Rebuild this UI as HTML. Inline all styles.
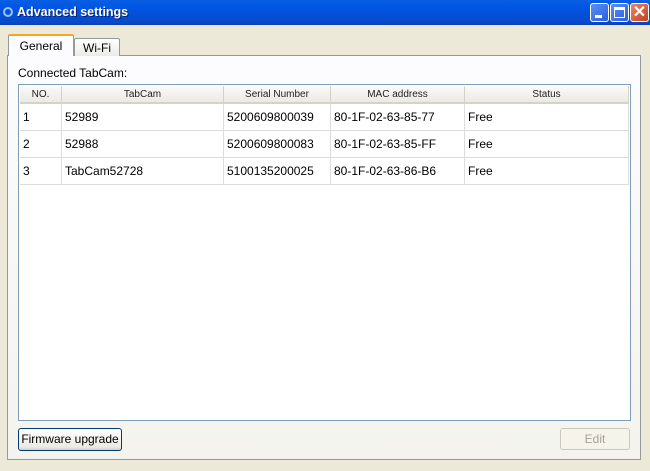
<!DOCTYPE html>
<html><head><meta charset="utf-8"><style>
*{margin:0;padding:0;box-sizing:border-box}
body{width:650px;height:471px;overflow:hidden;background:#ece9d8;font-family:"Liberation Sans",sans-serif;position:relative;font-size:11px;color:#000}
.a{position:absolute}
#title{left:0;top:0;width:650px;height:25px;background:linear-gradient(#0a5fe0,#0058e6 20%,#0250d6 60%,#0a48c8 90%,#0840b0);}
#title .t{left:17px;top:5px;color:#fff;font-weight:bold;font-size:12.5px;text-shadow:1px 1px #0a1f6e}
.wb{top:3px;width:19px;height:19px;border:1px solid #fff;border-radius:3px;background:linear-gradient(135deg,#5c8ff4,#2a5fe0)}
#panel{left:7px;top:55px;width:634px;height:405px;border:1px solid #919b9c;background:linear-gradient(#fcfcfe,#f4f3ee)}
.tab{top:36px;height:20px;border:1px solid #919b9c;border-bottom:none;background:linear-gradient(#fff,#ecebe6);font-size:12px;text-align:center;line-height:18px;border-radius:2px 2px 0 0}
#tbl{left:18px;top:84px;width:613px;height:337px;border:1px solid #7f9db9;background:#fff}
.h{top:86px;height:18px;background:linear-gradient(#fafaf8,#ebeae3);border-bottom:2px solid #d6d3c6;border-right:1px solid #d6d3c6;font-size:10px;text-align:center;line-height:17px;color:#222}
.c{height:27px;border-right:1px solid #dcdcdc;border-bottom:1px solid #dcdcdc;font-size:12px;line-height:26px;padding-left:3px}
.btn{border:1px solid #003c74;border-radius:3px;background:linear-gradient(#fff,#ecebe6 85%,#d6d0c5);font-size:12px;text-align:center;line-height:20px}
</style></head><body>
<div id="title" class="a">
<div class="a" style="left:3px;top:7px;width:10px;height:10px;border:2px solid #9cc0ff;border-radius:50%"></div>
<div class="a t">Advanced settings</div>
<div class="a wb" style="left:590px"><div class="a" style="left:4px;top:11px;width:7px;height:3px;background:#fff"></div></div>
<div class="a wb" style="left:610px"><div class="a" style="left:3px;top:3px;width:11px;height:11px;border:1px solid #fff;border-top-width:3px"></div></div>
<div class="a wb" style="left:630px;width:19px;background:linear-gradient(135deg,#e8876a,#c6401c)"><div class="a" style="left:0;top:-2px;width:17px;color:#fff;font-weight:bold;font-size:16px;text-align:center">✕</div></div>
</div>
<div id="panel" class="a"></div>
<div class="a tab" style="left:74px;top:38px;width:46px;height:18px">Wi-Fi</div>
<div class="a tab" style="left:8px;top:34px;width:66px;height:22px;border-top:2px solid #f5a623;background:#fcfcfe;line-height:20px">General</div>
<div class="a" style="left:18px;top:66px;font-size:12px">Connected TabCam:</div>
<div id="tbl" class="a"></div>
<div class="a h" style="left:20px;width:42px">NO.</div>
<div class="a h" style="left:62px;width:162px">TabCam</div>
<div class="a h" style="left:224px;width:107px">Serial Number</div>
<div class="a h" style="left:331px;width:134px">MAC address</div>
<div class="a h" style="left:465px;width:164px">Status</div>
<div class="a" style="left:20px;top:104px">
<div style="display:flex"><div class="c" style="width:42px">1</div><div class="c" style="width:162px">52989</div><div class="c" style="width:107px">5200609800039</div><div class="c" style="width:134px">80-1F-02-63-85-77</div><div class="c" style="width:164px">Free</div></div>
<div style="display:flex"><div class="c" style="width:42px">2</div><div class="c" style="width:162px">52988</div><div class="c" style="width:107px">5200609800083</div><div class="c" style="width:134px">80-1F-02-63-85-FF</div><div class="c" style="width:164px">Free</div></div>
<div style="display:flex"><div class="c" style="width:42px">3</div><div class="c" style="width:162px">TabCam52728</div><div class="c" style="width:107px">5100135200025</div><div class="c" style="width:134px">80-1F-02-63-86-B6</div><div class="c" style="width:164px">Free</div></div>
</div>
<div class="a btn" style="left:18px;top:428px;width:104px;height:23px">Firmware upgrade</div>
<div class="a btn" style="left:560px;top:428px;width:70px;height:22px;border-color:#cac8bb;color:#a6a296;background:#f5f4ea">Edit</div>
</body></html>
